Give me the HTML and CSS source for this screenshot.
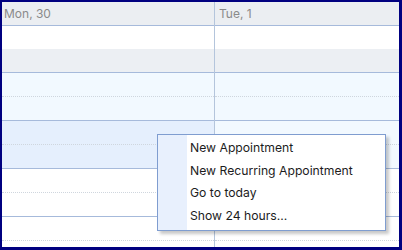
FILE: index.html
```html
<!DOCTYPE html>
<html lang="en">
<head>
  <meta charset="UTF-8">
  <title>Scheduler</title>
  <link rel="stylesheet" href="styles.css">
</head>
<body>
<div class="frame">
  <div class="scheduler">
    <div class="day day-mon">
      <div class="day-header">Mon, 30</div>
      <div class="all-day"></div>
      <div class="all-day-gray"></div>
      <div class="slot work half"></div>
      <div class="slot work hour"></div>
      <div class="slot selected half"></div>
      <div class="slot selected hour"></div>
      <div class="slot half"></div>
      <div class="slot hour"></div>
      <div class="slot half"></div>
      <div class="slot"></div>
    </div>
    <div class="day day-tue">
      <div class="day-header">Tue, 1</div>
      <div class="all-day"></div>
      <div class="all-day-gray"></div>
      <div class="slot work half"></div>
      <div class="slot work hour"></div>
      <div class="slot work half"></div>
      <div class="slot work hour"></div>
      <div class="slot half"></div>
      <div class="slot hour"></div>
      <div class="slot half"></div>
      <div class="slot"></div>
    </div>
  </div>

  <ul class="context-menu">
    <li class="menu-item">New Appointment</li>
    <li class="menu-item">New Recurring Appointment</li>
    <li class="menu-item">Go to today</li>
    <li class="menu-item">Show 24 hours...</li>
  </ul>
</div>
</body>
</html>
```

FILE: styles.css
```css
* {
  margin: 0;
  padding: 0;
  box-sizing: border-box;
}

html, body {
  height: 100%;
}

body {
  font-family: Inter, "Liberation Sans", sans-serif;
  font-size: 12px;
  background-color: #fff;
}

.frame {
  position: relative;
  width: 402px;
  height: 250px;
  border: 2px solid #000080;
  border-right-width: 3px;
  border-bottom-width: 3px;
  overflow: hidden;
}

.scheduler {
  display: flex;
  height: 100%;
}

.day {
  display: flex;
  flex-direction: column;
  overflow: hidden;
}

.day > div {
  flex: none;
}

.day-mon {
  width: 212px;
}

.day-tue {
  flex: 1;
  border-left: 1px solid #b4c5dc;
}

.day-header {
  height: 24px;
  padding-left: 2px;
  line-height: 23px;
  color: #8a8a8a;
  background-color: #ebeef2;
  border-bottom: 1px solid #a6badb;
}

.day-tue .day-header {
  padding-left: 4px;
}

.all-day {
  height: 23px;
  background-color: #fff;
}

.all-day-gray {
  height: 24px;
  background-color: #eceff3;
  border-bottom: 1px solid #a6badb;
}

.slot {
  height: 24px;
  background-color: #fff;
}

.slot.work {
  background-color: #f2f9ff;
}

.slot.selected {
  background-color: #e5effd;
}

.slot.half {
  border-bottom: 1px dotted #cfd6de;
}

.slot.hour {
  border-bottom: 1px solid #a6badb;
}

.context-menu {
  position: absolute;
  left: 155px;
  top: 132px;
  width: 229px;
  height: 97px;
  padding: 2px 0 3px 0;
  list-style: none;
  background: linear-gradient(to right, #e8f0fd 29px, #fff 29px);
  border: 1px solid #7f9dd0;
  box-shadow: 3px 3px 3px rgba(0, 0, 0, 0.22);
}

.menu-item {
  height: 22.5px;
  padding-left: 32px;
  line-height: 22.5px;
  font-size: 12.2px;
  color: #1c1c1c;
  white-space: nowrap;
}
```
